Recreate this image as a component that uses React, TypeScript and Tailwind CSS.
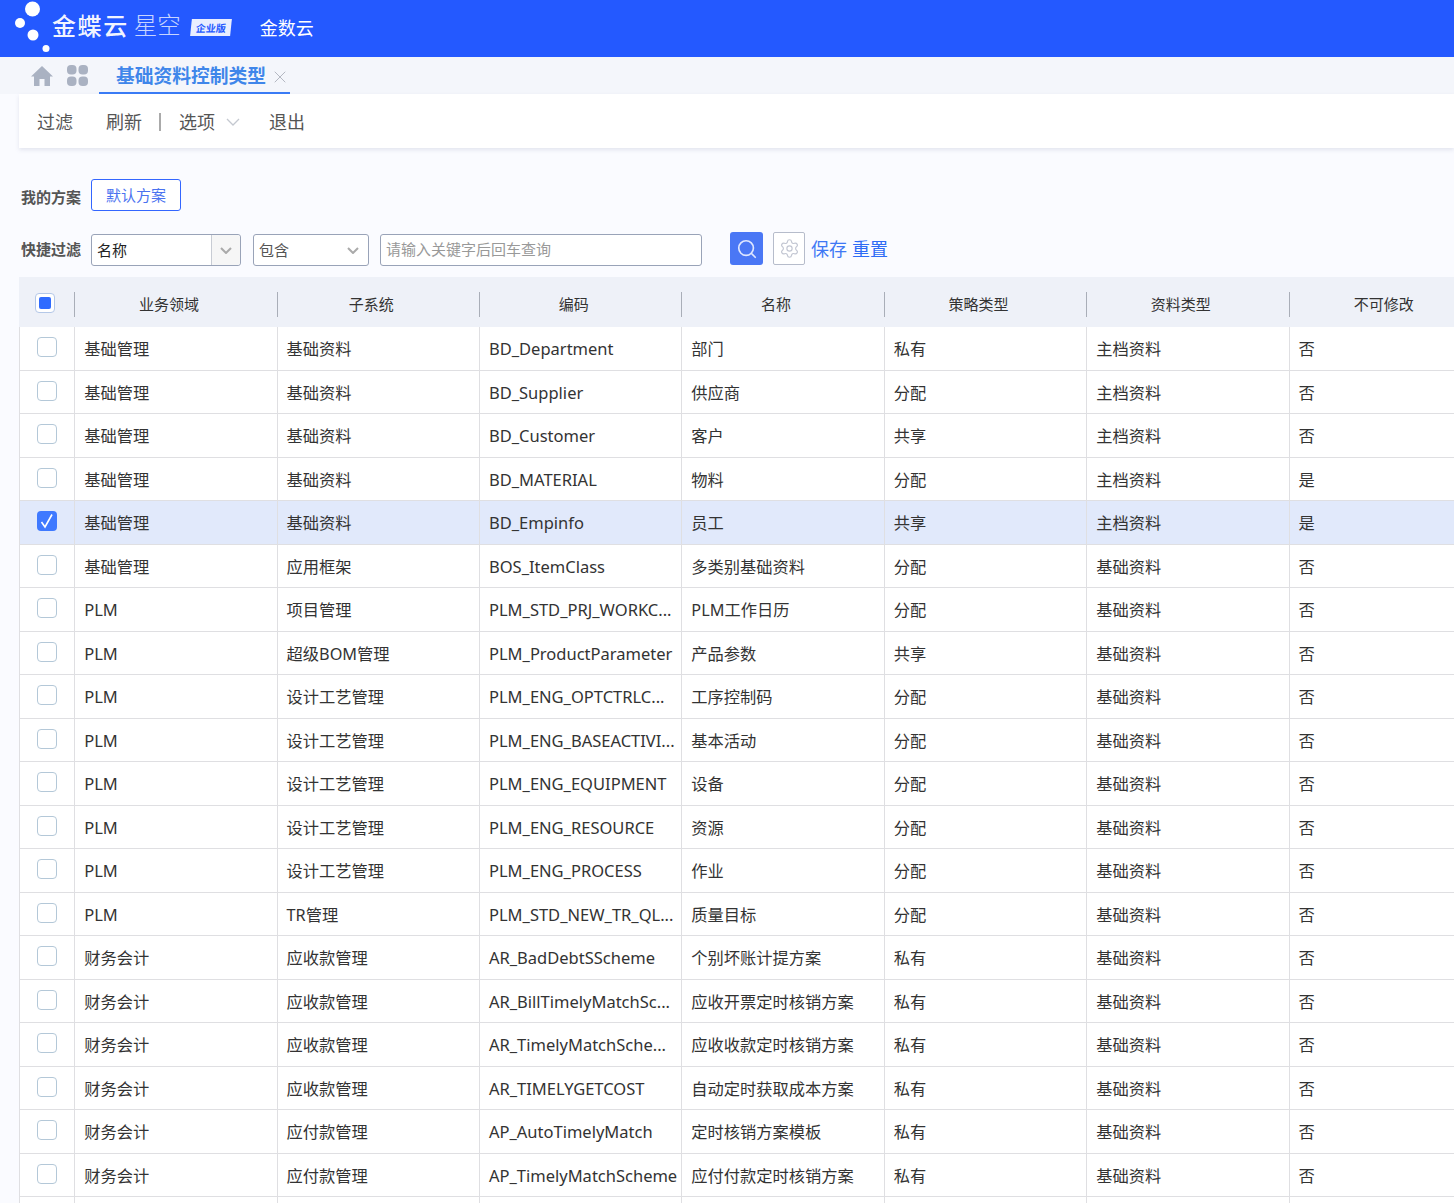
import { Search, Settings, X } from "lucide-react";

const font = '"Noto Sans", "Noto Sans CJK SC", sans-serif';

const COLUMNS = ["业务领域", "子系统", "编码", "名称", "策略类型", "资料类型", "不可修改"];

const ROWS: string[][] = [
  ["基础管理", "基础资料", "BD_Department", "部门", "私有", "主档资料", "否"],
  ["基础管理", "基础资料", "BD_Supplier", "供应商", "分配", "主档资料", "否"],
  ["基础管理", "基础资料", "BD_Customer", "客户", "共享", "主档资料", "否"],
  ["基础管理", "基础资料", "BD_MATERIAL", "物料", "分配", "主档资料", "是"],
  ["基础管理", "基础资料", "BD_Empinfo", "员工", "共享", "主档资料", "是"],
  ["基础管理", "应用框架", "BOS_ItemClass", "多类别基础资料", "分配", "基础资料", "否"],
  ["PLM", "项目管理", "PLM_STD_PRJ_WORKC...", "PLM工作日历", "分配", "基础资料", "否"],
  ["PLM", "超级BOM管理", "PLM_ProductParameter", "产品参数", "共享", "基础资料", "否"],
  ["PLM", "设计工艺管理", "PLM_ENG_OPTCTRLC...", "工序控制码", "分配", "基础资料", "否"],
  ["PLM", "设计工艺管理", "PLM_ENG_BASEACTIVI...", "基本活动", "分配", "基础资料", "否"],
  ["PLM", "设计工艺管理", "PLM_ENG_EQUIPMENT", "设备", "分配", "基础资料", "否"],
  ["PLM", "设计工艺管理", "PLM_ENG_RESOURCE", "资源", "分配", "基础资料", "否"],
  ["PLM", "设计工艺管理", "PLM_ENG_PROCESS", "作业", "分配", "基础资料", "否"],
  ["PLM", "TR管理", "PLM_STD_NEW_TR_QL...", "质量目标", "分配", "基础资料", "否"],
  ["财务会计", "应收款管理", "AR_BadDebtSScheme", "个别坏账计提方案", "私有", "基础资料", "否"],
  ["财务会计", "应收款管理", "AR_BillTimelyMatchSc...", "应收开票定时核销方案", "私有", "基础资料", "否"],
  ["财务会计", "应收款管理", "AR_TimelyMatchSche...", "应收收款定时核销方案", "私有", "基础资料", "否"],
  ["财务会计", "应收款管理", "AR_TIMELYGETCOST", "自动定时获取成本方案", "私有", "基础资料", "否"],
  ["财务会计", "应付款管理", "AP_AutoTimelyMatch", "定时核销方案模板", "私有", "基础资料", "否"],
  ["财务会计", "应付款管理", "AP_TimelyMatchScheme", "应付付款定时核销方案", "私有", "基础资料", "否"],
  // row cut off by the bottom of the page, only its borders show
  ["", "", "", "", "", "", ""],
];

function Caret({ w, h, color, sw }: { w: number; h: number; color: string; sw: number }) {
  return (
    <svg width={w} height={h} viewBox={`0 0 ${w} ${h}`} fill="none" className="shrink-0">
      <path d={`M1 1 L${w / 2} ${h - 1} L${w - 1} 1`} stroke={color} strokeWidth={sw} />
    </svg>
  );
}

function Logo() {
  return (
    <div className="flex items-center">
      <svg width="52" height="57" viewBox="0 0 52 57" className="shrink-0">
        <circle cx="32.5" cy="9" r="7.5" fill="#fff" />
        <circle cx="20" cy="23" r="5" fill="#fff" />
        <circle cx="33" cy="35" r="5.5" fill="#fff" />
        <circle cx="46" cy="48.5" r="3.5" fill="#fff" />
      </svg>
      <span className="-mt-[6px] text-[24px] font-medium text-white/95 leading-none tracking-[1.6px]">金蝶云</span>
      <span className="-mt-[6px] ml-[5px] text-[23.5px] font-light text-white/75 leading-none">星空</span>
      <span className="-mt-[2px] ml-[10px] w-[40px] h-[17px] bg-white/90 -skew-x-6 flex items-center justify-center text-[10px] font-bold leading-none text-[#2459ff]">
        企业版
      </span>
    </div>
  );
}

function Checkbox({ checked }: { checked?: boolean }) {
  if (checked) {
    return (
      <div className="w-5 h-5 rounded-[4px] bg-[#3f79ff] flex items-center justify-center">
        <svg width="14" height="16" viewBox="0 0 14 16" fill="none">
          <path d="M1.5 9 L5 14 L12 1.5" stroke="#fff" strokeWidth="1.6" />
        </svg>
      </div>
    );
  }
  return <div className="w-5 h-5 rounded-[4px] border border-[#b4c8d8] bg-white" />;
}

function TableHeader() {
  return (
    <div className="flex h-[50px] bg-[#eef1f8] items-center">
      <div className="w-[56.2px] shrink-0 h-[25px] mt-[4px] border-r border-[#a9aeb8] pl-[16px] flex items-start">
        <div className="w-5 h-5 mt-[1px] rounded-[4px] border border-[#b4c8e8] bg-white flex items-center justify-center">
          <div className="w-3 h-3 rounded-[2px] bg-[#2f6bff]" />
        </div>
      </div>
      {COLUMNS.map((c, i) => (
        <div
          key={c}
          className={`shrink-0 w-[202.4px] h-[25px] mt-[4px] pr-[14px] pt-[1px] flex items-center justify-center text-[15px] text-[#333] ${
            i < COLUMNS.length - 1 ? "border-r border-[#a9aeb8]" : ""
          }`}
        >
          {c}
        </div>
      ))}
    </div>
  );
}

function Row({ cells, selected }: { cells: string[]; selected: boolean }) {
  return (
    <div
      className={`flex h-[43.5px] border-l border-b border-[#dfdfe2] ${selected ? "bg-[#e1e9fb]" : "bg-white"}`}
    >
      <div className="w-[55.2px] shrink-0 border-r border-[#dfdfe2] pl-[17px] pt-[10px]">
        <Checkbox checked={selected} />
      </div>
      {cells.map((c, i) => (
        <div
          key={i}
          className={`shrink-0 w-[202.4px] pl-[9px] pt-[11px] leading-[22px] text-[#333] whitespace-nowrap ${
            /^[\x00-\x7f]+$/.test(c) ? "text-[16.5px]" : "text-[16.25px]"
          } ${i < cells.length - 1 ? "border-r border-[#dfdfe2]" : ""}`}
        >
          {c}
        </div>
      ))}
    </div>
  );
}

export default function App() {
  return (
    <div className="w-[1454px] h-[1203px] overflow-hidden bg-[#fafbff]" style={{ fontFamily: font }}>
      <header className="h-[57px] bg-[#2459ff] flex items-center pl-0">
        <Logo />
        <span className="ml-[29px] text-[18px] text-white">金数云</span>
      </header>

      <div className="h-[37px] bg-[#f4f6fb] flex items-end">
        <div className="h-full flex items-center pl-[31px] gap-[14px]">
          <svg width="22" height="22" viewBox="0 0 22 22" fill="#aab2c2">
            <path d="M11 1 L22 11.5 H19 V21 H13.5 V14 H8.5 V21 H3 V11.5 H0 Z" />
          </svg>
          <svg width="21" height="21" viewBox="0 0 21 21" fill="#aab2c2">
            <rect x="0" y="0" width="9.5" height="9.5" rx="4" />
            <rect x="11.5" y="0" width="9.5" height="9.5" rx="4" />
            <rect x="0" y="11.5" width="9.5" height="9.5" rx="4" />
            <rect x="11.5" y="11.5" width="9.5" height="9.5" rx="4" />
          </svg>
        </div>
        <div className="ml-[11px] w-[191px] h-full flex items-center pl-[17px] pt-[4px] border-b-2 border-[#3a7bf5]">
          <span className="text-[18.75px] font-bold text-[#3f86ea] whitespace-nowrap leading-none">基础资料控制类型</span>
          <X className="ml-[4px] text-[#b4b8c2] shrink-0" size={20} strokeWidth={1.2} />
        </div>
      </div>

      <div className="ml-[19px] h-[54px] pt-[2px] bg-white shadow-[0_2px_4px_rgba(200,205,220,0.45)] flex items-center text-[18px] text-[#555]">
        <span className="ml-[18px]">过滤</span>
        <span className="ml-[33px]">刷新</span>
        <span className="ml-[17px] w-[2px] h-[18px] bg-[#aaa]" />
        <span className="ml-[18px]">选项</span>
        <span className="ml-[11px]">
          <Caret w={14} h={8} color="#c4c8d0" sw={1.3} />
        </span>
        <span className="ml-[29px]">退出</span>
      </div>

      <div className="ml-[21px] mt-[31px] h-[32px] flex items-center">
        <span className="w-[70px] text-[15px] font-bold text-[#555] mt-[4px] leading-none whitespace-nowrap">我的方案</span>
        <button className="w-[90px] h-[32px] pt-[1px] rounded-[3px] border border-[#3366ff] bg-white text-[15px] text-[#4a72f0]">
          默认方案
        </button>
      </div>

      <div className="ml-[21px] mt-[23px] h-[32px] flex items-center">
        <span className="w-[70px] -mt-[2px] text-[15px] font-bold text-[#555] leading-none whitespace-nowrap">快捷过滤</span>
        <div className="w-[150px] h-[32px] rounded-[3px] border border-[#99a3b8] bg-white flex">
          <span className="flex-1 pl-[5px] text-[15px] leading-[31px] text-[#222]">名称</span>
          <span className="w-[29px] border-l border-[#c8ccd4] bg-[#f6f6f6] rounded-r-[3px] flex items-center justify-center">
            <Caret w={12} h={7} color="#aaa" sw={2} />
          </span>
        </div>
        <div className="ml-[12px] w-[116px] h-[32px] rounded-[3px] border border-[#99a3b8] bg-white flex items-center pl-[5px] pr-[9px]">
          <span className="flex-1 text-[15px] text-[#555]">包含</span>
          <Caret w={12} h={7} color="#aaa" sw={2} />
        </div>
        <div className="ml-[11px] w-[322px] h-[32px] rounded-[3px] border border-[#99a3b8] bg-white pl-[5px] text-[15px] leading-[28px] text-[#999]">
          请输入关键字后回车查询
        </div>
        <button className="ml-[28px] -mt-[3px] w-[33px] h-[33px] rounded-[3px] bg-[#4a77f5] flex items-center justify-center">
          <Search className="text-[#dfe7ff]" size={22} strokeWidth={1.8} />
        </button>
        <button className="ml-[10px] -mt-[3px] w-[32px] h-[33px] rounded-[2px] border border-[#b6bccb] bg-white flex items-center justify-center">
          <Settings className="text-[#c2c6d2]" size={21} strokeWidth={1.3} />
        </button>
        <span className="ml-[6px] -mt-[1px] text-[18px] text-[#3f78f5]">保存</span>
        <span className="ml-[5px] -mt-[1px] text-[18px] text-[#2e6bf5]">重置</span>
      </div>

      <div className="ml-[19px] mt-[11px]">
        <TableHeader />
        {ROWS.map((r, i) => (
          <Row key={i} cells={r} selected={i === 4} />
        ))}
      </div>
    </div>
  );
}
